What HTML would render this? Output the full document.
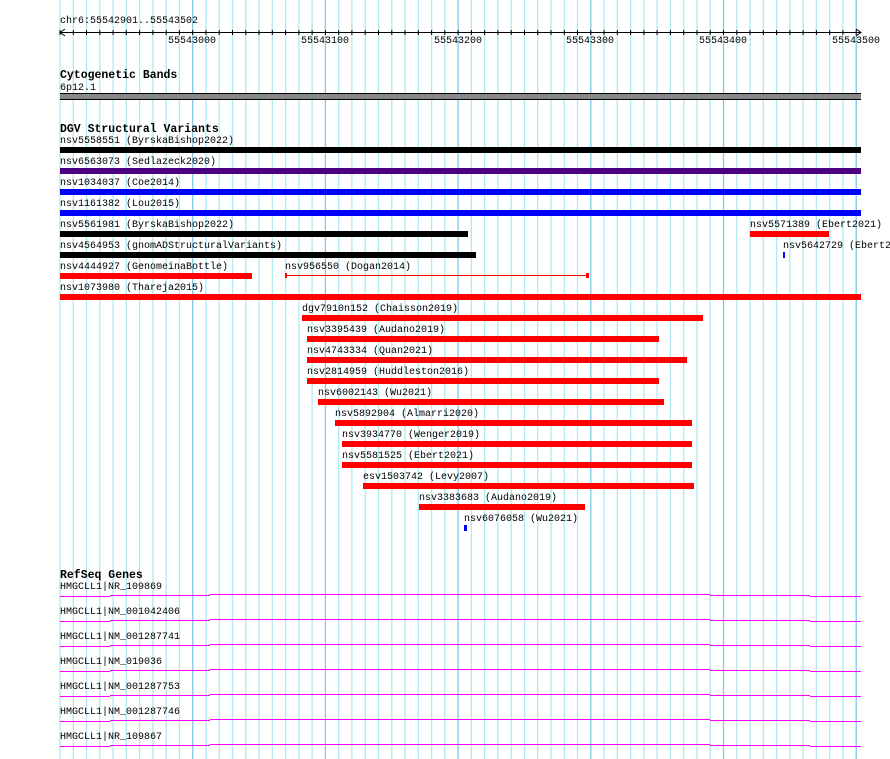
<!DOCTYPE html>
<html><head><meta charset="utf-8"><style>
body{margin:0;width:890px;height:759px;background:#fff;position:relative;overflow:hidden;font-family:"Liberation Mono",monospace;font-size:10px;color:#000}
.t{position:absolute;white-space:pre;line-height:12px;margin-top:2px}
.h{font-weight:bold;font-size:11.5px;margin-top:3px}
.b{position:absolute;height:6px}
</style></head><body>
<svg width="890" height="759" style="position:absolute;left:0;top:0">
<g id="grid"></g>
</svg>
<script>
(function(){
var g=document.getElementById('grid'),s='';
for(var k=0;k<=60;k++){var x=(60+k*13.27).toFixed(1);var d=(k%10==0&&k>0);
s+='<line x1="'+x+'" y1="0" x2="'+x+'" y2="759" stroke="'+(d?'#80c8ec':'#aeeaf0')+'" stroke-width="1.3"/>';}
s+='<line x1="60" y1="32.5" x2="861" y2="32.5" stroke="#000"/>';
for(var k=0;k<=60;k++){var x=(60+k*13.27).toFixed(1);s+='<line x1="'+x+'" y1="30" x2="'+x+'" y2="35" stroke="#000"/>';}
s+='<polyline points="65,29 60,32.5 65,36" fill="none" stroke="#000"/>';
s+='<polyline points="856,29 861,32.5 856,36" fill="none" stroke="#000"/>';
var xs=[60,110,210,310,410,510,610,710,810,861],off=[2,1,0,0,0,0,0,1,2,3];
for(var r=0;r<7;r++){var base=594+r*25;
for(var i=0;i<9;i++){var y=base+off[i]+0.5;s+='<line x1="'+xs[i]+'" y1="'+y+'" x2="'+xs[i+1]+'" y2="'+y+'" stroke="#ff00ff"/>';}}
g.innerHTML=s;
})();
</script>
<div class="t" style="left:60px;top:14px">chr6:55542901..55543502</div>
<div class="t" style="left:168px;top:34px">55543000</div>
<div class="t" style="left:301px;top:34px">55543100</div>
<div class="t" style="left:434px;top:34px">55543200</div>
<div class="t" style="left:566px;top:34px">55543300</div>
<div class="t" style="left:699px;top:34px">55543400</div>
<div class="t" style="left:832px;top:34px">55543500</div>

<div class="t h" style="left:60px;top:67px">Cytogenetic Bands</div>
<div class="t" style="left:60px;top:81px">6p12.1</div>
<div style="position:absolute;left:60px;top:93px;width:801px;height:5px;background:#888;border-top:1px solid #000;border-bottom:1px solid #000"></div>

<div class="t h" style="left:60px;top:121px">DGV Structural Variants</div>

<div class="t" style="left:60px;top:134px">nsv5558551 (ByrskaBishop2022)</div>
<div class="b" style="left:60px;top:147px;width:801px;background:#000"></div>
<div class="t" style="left:60px;top:155px">nsv6563073 (Sedlazeck2020)</div>
<div class="b" style="left:60px;top:168px;width:801px;background:#4b0082"></div>
<div class="t" style="left:60px;top:176px">nsv1034037 (Coe2014)</div>
<div class="b" style="left:60px;top:189px;width:801px;background:#0000ff"></div>
<div class="t" style="left:60px;top:197px">nsv1161382 (Lou2015)</div>
<div class="b" style="left:60px;top:210px;width:801px;background:#0000ff"></div>
<div class="t" style="left:60px;top:218px">nsv5561981 (ByrskaBishop2022)</div>
<div class="b" style="left:60px;top:231px;width:408px;background:#000"></div>
<div class="t" style="left:750px;top:218px">nsv5571389 (Ebert2021)</div>
<div class="b" style="left:750px;top:231px;width:79px;background:#f00"></div>
<div class="t" style="left:60px;top:239px">nsv4564953 (gnomADStructuralVariants)</div>
<div class="b" style="left:60px;top:252px;width:416px;background:#000"></div>
<div class="t" style="left:783px;top:239px">nsv5642729 (Ebert2021)</div>
<div class="b" style="left:783px;top:252px;width:2px;background:#0000ff"></div>
<div class="t" style="left:60px;top:260px">nsv4444927 (GenomeinaBottle)</div>
<div class="b" style="left:60px;top:273px;width:192px;background:#f00"></div>
<div class="t" style="left:285px;top:260px">nsv956550 (Dogan2014)</div>
<div class="b" style="left:285px;top:275px;width:303px;height:1px;background:#f00"></div>
<div class="b" style="left:285px;top:273px;width:2px;height:5px;background:#f00"></div>
<div class="b" style="left:586px;top:273px;width:3px;height:5px;background:#f00"></div>
<div class="t" style="left:60px;top:281px">nsv1073980 (Thareja2015)</div>
<div class="b" style="left:60px;top:294px;width:801px;background:#f00"></div>

<div class="t" style="left:302px;top:302px">dgv7910n152 (Chaisson2019)</div>
<div class="b" style="left:302px;top:315px;width:401px;background:#f00"></div>
<div class="t" style="left:307px;top:323px">nsv3395439 (Audano2019)</div>
<div class="b" style="left:307px;top:336px;width:352px;background:#f00"></div>
<div class="t" style="left:307px;top:344px">nsv4743334 (Quan2021)</div>
<div class="b" style="left:307px;top:357px;width:380px;background:#f00"></div>
<div class="t" style="left:307px;top:365px">nsv2814959 (Huddleston2016)</div>
<div class="b" style="left:307px;top:378px;width:352px;background:#f00"></div>
<div class="t" style="left:318px;top:386px">nsv6002143 (Wu2021)</div>
<div class="b" style="left:318px;top:399px;width:346px;background:#f00"></div>
<div class="t" style="left:335px;top:407px">nsv5892904 (Almarri2020)</div>
<div class="b" style="left:335px;top:420px;width:357px;background:#f00"></div>
<div class="t" style="left:342px;top:428px">nsv3934770 (Wenger2019)</div>
<div class="b" style="left:342px;top:441px;width:350px;background:#f00"></div>
<div class="t" style="left:342px;top:449px">nsv5581525 (Ebert2021)</div>
<div class="b" style="left:342px;top:462px;width:350px;background:#f00"></div>
<div class="t" style="left:363px;top:470px">esv1503742 (Levy2007)</div>
<div class="b" style="left:363px;top:483px;width:331px;background:#f00"></div>
<div class="t" style="left:419px;top:491px">nsv3383683 (Audano2019)</div>
<div class="b" style="left:419px;top:504px;width:166px;background:#f00"></div>
<div class="t" style="left:464px;top:512px">nsv6076058 (Wu2021)</div>
<div class="b" style="left:464px;top:525px;width:3px;background:#0000ff"></div>

<div class="t h" style="left:60px;top:567px">RefSeq Genes</div>
<div class="t" style="left:60px;top:580px">HMGCLL1|NR_109869</div>
<div class="t" style="left:60px;top:605px">HMGCLL1|NM_001042406</div>
<div class="t" style="left:60px;top:630px">HMGCLL1|NM_001287741</div>
<div class="t" style="left:60px;top:655px">HMGCLL1|NM_019036</div>
<div class="t" style="left:60px;top:680px">HMGCLL1|NM_001287753</div>
<div class="t" style="left:60px;top:705px">HMGCLL1|NM_001287746</div>
<div class="t" style="left:60px;top:730px">HMGCLL1|NR_109867</div>
</body></html>
